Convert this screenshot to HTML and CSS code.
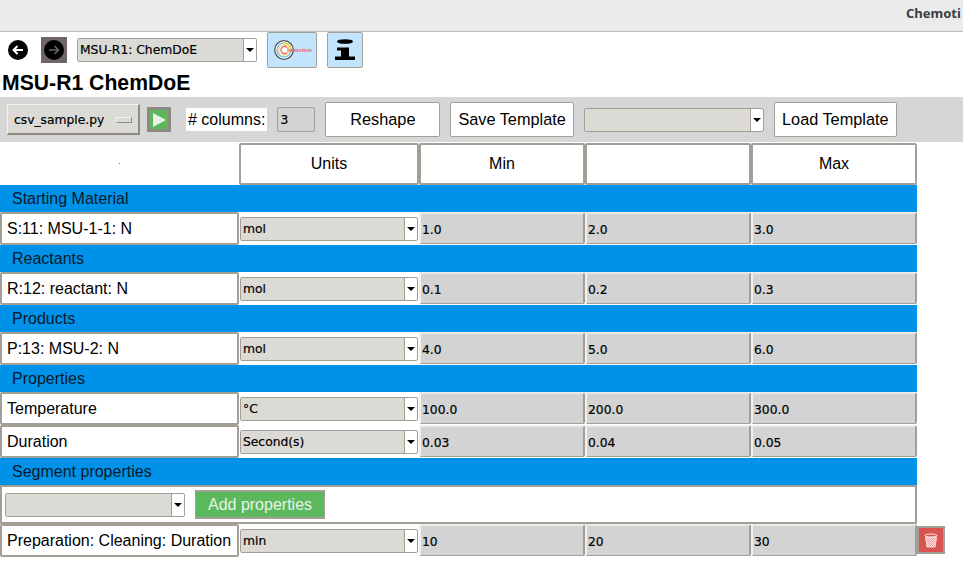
FILE: index.html
```html
<!DOCTYPE html>
<html lang="en">
<head>
<meta charset="UTF-8">
<meta name="viewport" content="width=device-width, initial-scale=1.0">
<title>Chemotion</title>
<link rel="stylesheet" href="styles.css">
</head>
<body>
<div class="titlebar"><span class="window-title">Chemoti</span></div>

<div class="navbar">
    <svg class="nav-icon" width="20" height="20" viewBox="0 0 20 20">
        <circle cx="10" cy="10" r="10" fill="#000"/>
        <path d="M15 10H6M9.500 6L5.500 10L9.500 14" fill="none" stroke="#fff" stroke-width="2"/>
    </svg>
    <div class="nav-disabled">
        <svg width="20" height="20" viewBox="0 0 20 20">
            <circle cx="10" cy="10" r="10" fill="#000"/>
            <path d="M5 10H14M10.500 6L14.500 10L10.500 14" fill="none" stroke="#6f6466" stroke-width="1.500"/>
        </svg>
    </div>
    <div class="combo combo-nav"><span class="combo-text">MSU-R1: ChemDoE</span><span class="combo-arrow"></span></div>
    <button class="icon-btn logo-btn">
        <svg width="40" height="24" viewBox="0 0 40 24">
            <circle cx="12" cy="12" r="9.300" fill="#fff" stroke="#555" stroke-width="1.300"/>
            <circle cx="12" cy="12" r="7" fill="none" stroke="#5bb8e8" stroke-width="1.200"/>
            <path d="M12 5A7 7 0 0 1 19 12" fill="none" stroke="#f2cf4a" stroke-width="1.400"/>
            <circle cx="12" cy="12" r="5.200" fill="none" stroke="#f2cf4a" stroke-width="1"/>
            <path d="M15 9.500A3.500 3.500 0 1 0 15 14.500" fill="none" stroke="#ee5f6a" stroke-width="1.200"/>
            <text x="15" y="14" class="logo-text">hemotion</text>
        </svg>
    </button>
    <button class="icon-btn info-btn">
        <svg width="22" height="22" viewBox="0 0 22 22">
            <ellipse cx="11" cy="2.500" rx="8" ry="2.300" fill="#000"/>
            <path d="M3 8.500H15V17.500H21V21H1V17.500H7V11.500H3Z" fill="#000"/>
        </svg>
    </button>
</div>

<h1 class="page-title">MSU-R1 ChemDoE</h1>

<div class="toolbar">
    <div class="option-menu"><span>csv_sample.py</span><span class="option-mark"></span></div>
    <button class="run-btn"><span class="run-mark"></span></button>
    <span class="columns-label"># columns:</span>
    <div class="columns-input">3</div>
    <button class="tool-btn reshape-btn">Reshape</button>
    <button class="tool-btn">Save Template</button>
    <div class="combo combo-template"><span class="combo-text"></span><span class="combo-arrow"></span></div>
    <button class="tool-btn load-btn">Load Template</button>
</div>

<div class="table">
    <div class="head-blank"><span class="head-dot"></span></div>
    <div class="head-cell">Units</div>
    <div class="head-cell">Min</div>
    <div class="head-cell"></div>
    <div class="head-cell">Max</div>

    <div class="section">Starting Material</div>
    <div class="name-cell">S:11: MSU-1-1: N</div>
    <div class="unit-cell"><div class="combo"><span class="combo-text">mol</span><span class="combo-arrow"></span></div></div>
    <div class="value-cell">1.0</div>
    <div class="value-cell">2.0</div>
    <div class="value-cell">3.0</div>

    <div class="section">Reactants</div>
    <div class="name-cell">R:12: reactant: N</div>
    <div class="unit-cell"><div class="combo"><span class="combo-text">mol</span><span class="combo-arrow"></span></div></div>
    <div class="value-cell">0.1</div>
    <div class="value-cell">0.2</div>
    <div class="value-cell">0.3</div>

    <div class="section">Products</div>
    <div class="name-cell">P:13: MSU-2: N</div>
    <div class="unit-cell"><div class="combo"><span class="combo-text">mol</span><span class="combo-arrow"></span></div></div>
    <div class="value-cell">4.0</div>
    <div class="value-cell">5.0</div>
    <div class="value-cell">6.0</div>

    <div class="section">Properties</div>
    <div class="name-cell">Temperature</div>
    <div class="unit-cell"><div class="combo"><span class="combo-text">°C</span><span class="combo-arrow"></span></div></div>
    <div class="value-cell">100.0</div>
    <div class="value-cell">200.0</div>
    <div class="value-cell">300.0</div>

    <div class="name-cell">Duration</div>
    <div class="unit-cell"><div class="combo"><span class="combo-text">Second(s)</span><span class="combo-arrow"></span></div></div>
    <div class="value-cell">0.03</div>
    <div class="value-cell">0.04</div>
    <div class="value-cell">0.05</div>

    <div class="section">Segment properties</div>
    <div class="add-row">
        <div class="combo combo-add"><span class="combo-text"></span><span class="combo-arrow"></span></div>
        <button class="add-btn">Add properties</button>
    </div>

    <div class="name-cell">Preparation: Cleaning: Duration</div>
    <div class="unit-cell"><div class="combo"><span class="combo-text">min</span><span class="combo-arrow"></span></div></div>
    <div class="value-cell">10</div>
    <div class="value-cell">20</div>
    <div class="value-cell">30</div>
    <button class="trash-btn">
        <svg width="14" height="15" viewBox="0 0 14 15">
            <defs>
                <pattern id="trashDots" width="2" height="2" patternUnits="userSpaceOnUse">
                    <rect width="2" height="2" fill="#fbe3e3"/>
                    <rect width="1" height="1" fill="#ee9a9a"/>
                    <rect x="1" y="1" width="1" height="1" fill="#ee9a9a"/>
                </pattern>
            </defs>
            <path d="M1.500 4L3 14H11L12.500 4Z" fill="url(#trashDots)" stroke="#fbdcdc" stroke-width="1"/>
            <ellipse cx="7" cy="2.500" rx="6" ry="1.500" fill="#d9534f" stroke="#fde8e8" stroke-width="1"/>
        </svg>
    </button>
</div>
</body>
</html>
```

FILE: styles.css
```css
html, body {
    margin: 0;
    padding: 0;
    background: #fff;
}
body {
    width: 963px;
    height: 570px;
    overflow: hidden;
    font-family: "Liberation Sans", Arial, sans-serif;
    font-size: 16px;
    color: #000;
}
button {
    font-family: "Liberation Sans", Arial, sans-serif;
    font-size: 16.300px;
    color: #000;
    padding: 0;
    box-sizing: border-box;
}

/* window title */
.titlebar {
    height: 31px;
    background: #ebebeb;
    border-bottom: 1px solid #bdbdbd;
    overflow: hidden;
    white-space: nowrap;
    padding-left: 906px;
}
.window-title {
    font-family: "Noto Sans", sans-serif;
    font-weight: 700;
    font-size: 13px;
    line-height: 26px;
    color: #3d3d3d;
}

/* nav row */
.navbar {
    display: flex;
    align-items: center;
    height: 36px;
    padding-left: 8px;
}
.nav-disabled {
    display: flex;
    align-items: center;
    justify-content: center;
    width: 26px;
    height: 26px;
    margin-left: 13px;
    background: #6f6466;
}
.combo {
    display: flex;
    box-sizing: border-box;
    height: 24px;
    border: 1px solid #a39f96;
    border-radius: 2px;
    background: #fff;
}
.combo-text {
    flex: 1;
    box-sizing: border-box;
    background: #dcdad5;
    padding: 1px 0 0 2px;
    border-right: 1px solid #a39f96;
    font-family: "DejaVu Sans", sans-serif;
    font-size: 12.300px;
    line-height: 21px;
    color: #000;
    -webkit-text-stroke: 0.200px #000;
}
.combo-arrow {
    width: 12px;
    position: relative;
}
.combo-arrow::after {
    content: "";
    position: absolute;
    left: 2px;
    top: 9px;
    border-left: 4px solid transparent;
    border-right: 4px solid transparent;
    border-top: 4px solid #000;
}
.combo-nav {
    width: 180px;
    margin-left: 10px;
}
.icon-btn {
    height: 36px;
    background: #c3e4fd;
    border: 1px solid #a39f96;
    border-radius: 2px;
    display: flex;
    align-items: center;
    justify-content: center;
}
.logo-btn {
    width: 50px;
    margin-left: 10px;
}
.info-btn {
    width: 36px;
    margin-left: 10px;
}
.logo-text {
    font-family: "Liberation Sans", sans-serif;
    font-size: 5.500px;
    font-weight: 700;
    fill: #ee5f6a;
}
.page-title {
    margin: 0;
    height: 29px;
    padding-left: 2px;
    font-size: 21.200px;
    font-weight: 700;
    line-height: 30px;
}

/* gray toolbar */
.toolbar {
    display: flex;
    align-items: center;
    height: 45px;
    background: #d6d6d6;
    padding-left: 7px;
}
.option-menu {
    display: flex;
    align-items: center;
    justify-content: space-between;
    box-sizing: border-box;
    width: 133px;
    height: 31px;
    padding: 1px 6px 0 6px;
    background: #dcdad5;
    border-style: solid;
    border-color: #f3f2f0 #8e8a82 #8e8a82 #f3f2f0;
    border-width: 1px 2px 2px 1px;
    font-family: "DejaVu Sans", sans-serif;
    font-size: 12.300px;
    -webkit-text-stroke: 0.200px #000;
}
.option-mark {
    width: 14px;
    height: 4px;
    background: #dcdad5;
    border: 1px solid;
    border-color: #f3f2f0 #8e8a82 #8e8a82 #f3f2f0;
}
.run-btn {
    display: flex;
    align-items: center;
    justify-content: center;
    width: 24px;
    height: 25px;
    margin-left: 7px;
    background: #5cb85c;
    border: 3px solid #8e8a82;
}
.run-mark {
    border-left: 13px solid #e6f3e6;
    border-top: 7px solid transparent;
    border-bottom: 7px solid transparent;
}
.columns-label {
    margin-left: 15px;
    padding: 0 2px;
    height: 23px;
    line-height: 23px;
    background: #fff;
}
.columns-input {
    box-sizing: border-box;
    width: 38px;
    height: 25px;
    margin-left: 10px;
    padding-left: 2px;
    background: #d3d3d3;
    border: 1px solid #a39f96;
    border-radius: 2px;
    font-family: "DejaVu Sans", sans-serif;
    font-size: 12.300px;
    line-height: 25px;
    -webkit-text-stroke: 0.200px #000;
}
.tool-btn {
    height: 35px;
    padding: 0 7px;
    margin-left: 10px;
    background: #fff;
    border: 1px solid #a39f96;
    border-radius: 2px;
}
.reshape-btn {
    width: 115px;
}
.load-btn {
    width: 123px;
}
.combo-template {
    width: 180px;
    margin-left: 10px;
}

/* parameter table */
.table {
    display: grid;
    grid-template-columns: 239px 180px 166px 166px 166px 28px;
    grid-auto-rows: min-content;
    margin-top: 1px;
}
.head-blank {
    height: 42px;
    position: relative;
}
.head-dot {
    position: absolute;
    left: 119px;
    top: 20px;
    width: 1px;
    height: 1px;
    background: #777;
}
.head-cell {
    box-sizing: border-box;
    height: 42px;
    background: #fff;
    border: 2px solid #a39f96;
    border-radius: 2px;
    text-align: center;
    line-height: 38px;
}
.section {
    grid-column: 1 / 6;
    height: 27px;
    background: #0092e8;
    padding-left: 12px;
    line-height: 27px;
    color: #07192b;
}
.name-cell {
    grid-column: 1;
    box-sizing: border-box;
    height: 33px;
    background: #fff;
    border: 2px solid #a39f96;
    border-radius: 2px;
    padding-left: 5px;
    line-height: 29px;
    white-space: nowrap;
}
.unit-cell {
    display: flex;
    align-items: center;
    box-sizing: border-box;
    height: 33px;
    padding: 1px 1px 0;
}
.unit-cell .combo {
    width: 100%;
}
.value-cell {
    box-sizing: border-box;
    height: 32px;
    padding: 3px 0 0 1px;
    background: #d3d3d3;
    border: 2px solid #a39f96;
    border-top-color: #eceae6;
    border-left-color: #f2f1ee;
    border-bottom-width: 1px;
    border-radius: 2px;
    font-family: "DejaVu Sans", sans-serif;
    font-size: 12.300px;
    line-height: 27px;
    -webkit-text-stroke: 0.200px #000;
}
.add-row {
    grid-column: 1 / 6;
    display: flex;
    align-items: center;
    box-sizing: border-box;
    height: 39px;
    background: #fff;
    border: 2px solid #a39f96;
    padding-left: 3px;
}
.combo-add {
    width: 180px;
}
.add-btn {
    width: 130px;
    height: 29px;
    margin-left: 10px;
    background: #5cb85c;
    border-style: solid;
    border-color: #a39f96;
    border-width: 2px 1px;
    font-size: 16px;
    color: #e6f3e6;
}
.trash-btn {
    display: flex;
    align-items: center;
    justify-content: center;
    width: 28px;
    height: 28px;
    margin-top: 2px;
    background: #d9534f;
    border: 2px solid #a39f96;
}
```
